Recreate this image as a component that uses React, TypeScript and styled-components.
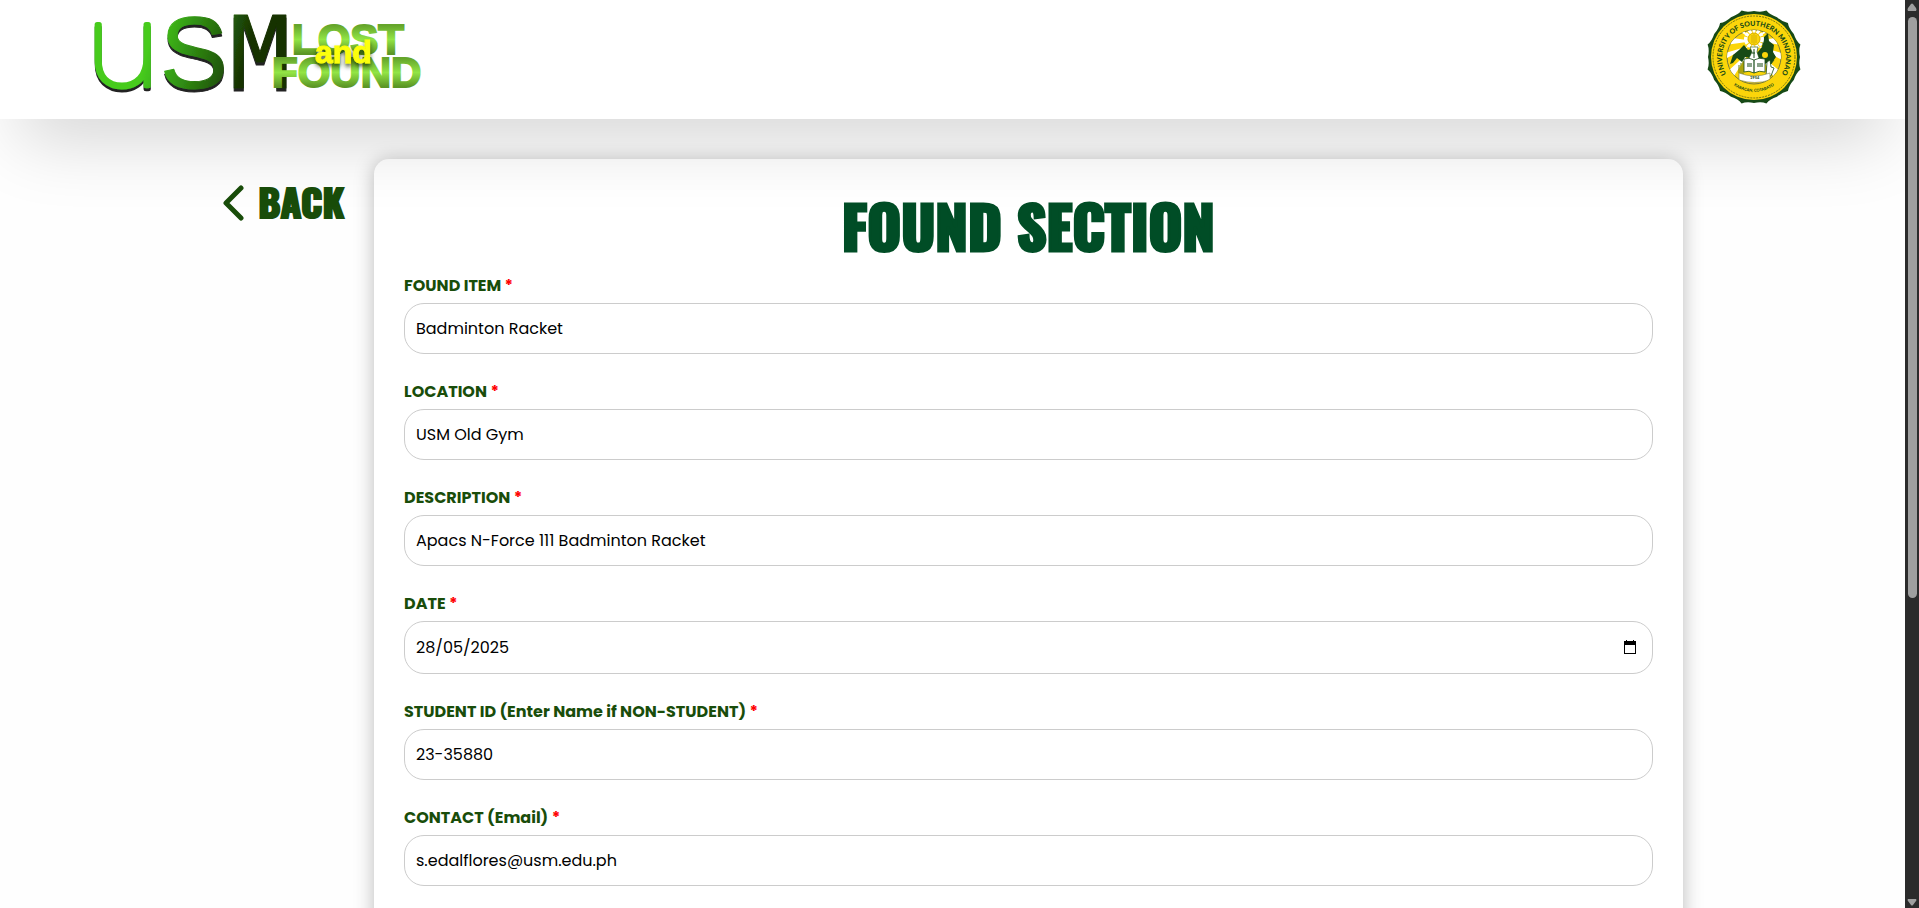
import React, { useId } from "react";
import styled, { createGlobalStyle } from "styled-components";

const bodyFont = `Poppins, Inter, "Liberation Sans", sans-serif`;
const headingFont = `Impact, Oswald, Anton, "DejaVu Sans Condensed", sans-serif`;

const GlobalStyle = createGlobalStyle`
  *, *::before, *::after { box-sizing: border-box; }
  body { margin: 0; background: #fff; font-family: ${bodyFont}; }
`;

const Shell = styled.div`
  display: grid;
  grid-template-columns: minmax(0, 1fr) 14px;
  height: 100vh;
`;

const Page = styled.div`
  overflow: auto;
  scrollbar-width: none;
  background: #fefefe;
`;

const Header = styled.header`
  position: relative;
  z-index: 1;
  display: flex;
  justify-content: space-between;
  align-items: flex-start;
  padding: 8px 102px 12px 80px;
  background: #fff;
  box-shadow: 0 40px 70px -20px rgba(0, 0, 0, 0.17);
`;

const Main = styled.main`
  display: flex;
  align-items: flex-start;
  gap: 30px;
  padding: 40px 222px;
`;

const BackLink = styled.a`
  display: flex;
  align-items: center;
  justify-content: space-between;
  flex: 0 0 122px;
  min-width: 0;
  margin-top: 20px;
  color: #194d0a;
  font: 700 38px/44px ${headingFont};
  -webkit-text-stroke: 2px currentColor;
  text-decoration: none;
`;

const BackText = styled.span`
  padding-bottom: 4px;
`;

const Card = styled.form`
  flex: 1;
  min-width: 0;
  padding: 30px;
  border-radius: 15px;
  background: #fff;
  box-shadow: 0 2px 20px rgba(0, 0, 0, 0.27);
`;

const Title = styled.h1`
  margin: 0 0 13px;
  color: #004d26;
  font: 700 58px/72px ${headingFont};
  -webkit-text-stroke: 3px currentColor;
  text-align: center;
`;

const Field = styled.div`
  display: flex;
  flex-direction: column;
  gap: 5px;
  margin-bottom: 26px;
`;

const Label = styled.label`
  color: #194d0a;
  font-size: 16px;
  font-weight: 700;
  line-height: 24px;
`;

const Required = styled.span`
  color: #f00;
`;

const InputBox = styled.div<{ $tall?: boolean }>`
  display: flex;
  align-items: center;
  height: ${(p) => (p.$tall ? 53 : 51)}px;
  padding: 0 11px;
  border: 1px solid #ccc;
  border-radius: 20px;
`;

const Input = styled.input`
  flex: 1;
  min-width: 0;
  padding: 0;
  border: 0;
  outline: 0;
  background: transparent;
  color: #000;
  font: 400 16px/24px ${bodyFont};
`;

const PickerButton = styled.button`
  display: flex;
  padding: 4px;
  border: 0;
  background: transparent;
`;

const ScrollTrack = styled.div`
  display: flex;
  flex-direction: column;
  align-items: center;
  background: #2b2b2b;
`;

const ScrollThumb = styled.div`
  width: 9px;
  height: 64%;
  margin: 4px 0 auto;
  border-radius: 5px;
  background: #9f9f9f;
`;

const Arrow = ({ down }: { down?: boolean }) => (
  <svg width="14" height="13" viewBox="0 0 14 13" aria-hidden="true">
    <path
      d={down ? "M3 4h8q1 1 0 2L8 10q-1 1-2 0L3 6q-1-1 0-2Z" : "M3 11h8q1-1 0-3L8 4q-1-1-2 0L3 8q-1 2 0 3Z"}
      fill="#9f9f9f"
    />
  </svg>
);

const LogoDrawing = styled.svg`
  overflow: visible;
`;

const SiteLogo = () => (
  <LogoDrawing width="360" height="99" viewBox="80 8 360 99" role="img" aria-label="USM Lost and Found">
    <defs>
      <linearGradient id="ink" gradientUnits="userSpaceOnUse" x1="150" y1="40" x2="245" y2="65">
        <stop offset="0" stopColor="#46cb1c" />
        <stop offset="0.3" stopColor="#36a016" />
        <stop offset="0.75" stopColor="#225c0a" />
        <stop offset="1" stopColor="#173003" />
      </linearGradient>
      <linearGradient id="lime" x1="0" y1="0" x2="0" y2="1">
        <stop offset="0.2" stopColor="#65a52b" />
        <stop offset="0.5" stopColor="#92e545" />
        <stop offset="0.8" stopColor="#5c9625" />
      </linearGradient>
      <filter id="inkShadow" x="-10%" y="-10%" width="120%" height="130%">
        <feDropShadow dx="0" dy="3" stdDeviation="0.4" floodColor="#222" />
      </filter>
      <filter id="andShadow" x="-20%" y="-20%" width="140%" height="160%">
        <feDropShadow dx="0" dy="3" stdDeviation="2" floodColor="#1b3300" floodOpacity="0.8" />
      </filter>
    </defs>
    <g fill="url(#ink)" stroke="url(#ink)" strokeLinejoin="round" filter="url(#inkShadow)">
      <text x="88" y="86" fontFamily="Poppins" fontWeight="200" fontSize="114" strokeWidth="5">u</text>
      <text x="160" y="88" fontFamily="Liberation Sans" fontSize="102" strokeWidth="1">S</text>
      <text x="230" y="88" fontFamily="DejaVu Sans Mono" fontSize="100" strokeWidth="1">M</text>
    </g>
    <g fontFamily="Liberation Sans" fontWeight="700" fontSize="42" fill="url(#lime)" stroke="url(#lime)" strokeWidth="2">
      <text x="292" y="54">LOST</text>
      <text x="272" y="87">FOUND</text>
    </g>
    <text x="315" y="63" fontFamily="Liberation Sans" fontWeight="700" fontSize="32" fill="#fcff08" stroke="#fcff08" filter="url(#andShadow)">and</text>
  </LogoDrawing>
);

const SEAL_POINTS = Array.from({ length: 12 }, (_, i) => {
  const at = (a: number, r: number) =>
    `${(Math.sin(a) * r).toFixed(1)} ${(-Math.cos(a) * r).toFixed(1)}`;
  const a = ((i + 0.5) * Math.PI) / 6;
  return `${i ? "L" : "M"}${at(a, 48)} Q${at(a + 0.1, 45)} ${at(a + Math.PI / 12, 46)} Q${at(a + 0.42, 45)} ${at(a + Math.PI / 6, 48)}`;
}).join(" ");

const Seal = () => (
  <svg width="98" height="98" viewBox="-49 -49 98 98" role="img" aria-label="University of Southern Mindanao seal">
    <defs>
      <path id="sealTop" d="M-27 18A32 32 0 1 1 27 18" />
      <path id="sealBottom" d="M-22 27A35 35 0 0 0 22 27" />
      <clipPath id="sealDisc"><circle r="27" /></clipPath>
    </defs>
    <path d={SEAL_POINTS} fill="#174a16" />
    <circle r="43" fill="#fbd50a" />
    <circle r="41" fill="none" stroke="#6f7310" strokeWidth="1" strokeDasharray="2 1" />
    <circle r="27" fill="#fbd50a" stroke="#777a39" strokeWidth="1" />
    <g clipPath="url(#sealDisc)">
      <path d="M0-16-28-12v-8ZM-2-12-29 2v-6ZM-4-6-22 22l-6-6ZM-6-20-20-30h8ZM2-16 28-20v8ZM3-11 28-4v7ZM4-4 28 16l-6 7ZM5-20 13-30h7Z" fill="#fff" />
      <path d="M-24 7l3-9 6-5 5-5 4 5 3-1 2 5-3 4-5-1-3 5-5-4-4 5ZM3-4l5-6 1-9 5-5 1 8 5 4-1 7 3 5-5 7-5-1-4 6-4-6Z" fill="#174a16" />
      <circle cx="0" cy="-18" r="8" fill="none" stroke="#fff" strokeWidth="4" strokeDasharray="3 1" />
      <circle cx="0" cy="-18" r="6" fill="#fbd50a" stroke="#d9b000" />
      <path d="M-2-22v8M0-23v10M2-22v8" stroke="#c9a300" strokeWidth="0.7" />
      <path d="M-4-10h8l-1 5 2 6-2 6h-6l-2-6 3-6Z" fill="#fff" stroke="#174a16" strokeWidth="0.6" />
      <path d="M0-8v9M-2-4h3" stroke="#174a16" strokeWidth="1" />
      <circle cx="11" cy="-2" r="3" fill="#fbd50a" />
      <path d="M-13 6v12M-11 4v13M-15 8v8" stroke="#5d7411" strokeWidth="1" />
      <path d="M13 5l3-2 1 7 3 1-3 8h-5ZM17 7l3-4" fill="#fff" stroke="#174a16" strokeWidth="0.8" />
      <path d="M-15 16q15 6 31 0v7q-15 5-31 0Z" fill="#fff" stroke="#777a39" strokeWidth="0.6" />
      <path d="M-10 2Q-5 0 0 3q5-3 11-1v13Q5 13 0 16q-5-3-10-1Z" fill="#fff" stroke="#174a16" strokeWidth="0.8" />
      <path d="M0 3v13M-7 7h5M-7 9h5M3 7h6M3 9h6" stroke="#174a16" strokeWidth="1.2" />
    </g>
    <text x="-4" y="22" fontSize="4" fontFamily="Lato" fontWeight="900" fill="#174a16">1954</text>
    <g fontFamily="Lato" fontWeight="900" fill="#174a16">
      <text fontSize="7">
        <textPath href="#sealTop" startOffset="50%" textAnchor="middle">UNIVERSITY OF SOUTHERN MINDANAO</textPath>
      </text>
      <text fontSize="4">
        <textPath href="#sealBottom" startOffset="50%" textAnchor="middle">KABACAN, COTABATO</textPath>
      </text>
    </g>
  </svg>
);

const Chevron = () => (
  <svg width="22" height="38" viewBox="0 0 22 38" aria-hidden="true">
    <path d="M19 4 4 19l15 15" fill="none" stroke="currentColor" strokeWidth="5" strokeLinecap="round" strokeLinejoin="round" />
  </svg>
);

const CalendarIcon = () => (
  <svg width="14" height="15" viewBox="0 0 14 15" aria-hidden="true">
    <path d="M3 0h1v1h6V0h1v1h2v13H1V1h2ZM2 5v8h10V5Z" fill="#000" fillRule="evenodd" />
  </svg>
);

type FormFieldProps = { label: string; value: string; type?: string; picker?: boolean };

const FormField = ({ label, value, type = "text", picker }: FormFieldProps) => {
  const id = useId();
  return (
    <Field>
      <Label htmlFor={id}>
        {label} <Required>*</Required>
      </Label>
      <InputBox $tall={picker}>
        <Input id={id} type={type} defaultValue={value} />
        {picker && (
          <PickerButton type="button" aria-label="Open calendar">
            <CalendarIcon />
          </PickerButton>
        )}
      </InputBox>
    </Field>
  );
};

export default function App() {
  return (
    <Shell>
      <GlobalStyle />
      <Page>
        <Header>
          <SiteLogo />
          <Seal />
        </Header>
        <Main>
          <BackLink href="#">
            <Chevron />
            <BackText>BACK</BackText>
          </BackLink>
          <Card>
            <Title>FOUND SECTION</Title>
            <FormField label="FOUND ITEM" value="Badminton Racket" />
            <FormField label="LOCATION" value="USM Old Gym" />
            <FormField label="DESCRIPTION" value="Apacs N-Force 111 Badminton Racket" />
            <FormField label="DATE" value="28/05/2025" picker />
            <FormField label="STUDENT ID (Enter Name if NON-STUDENT)" value="23-35880" />
            <FormField label="CONTACT (Email)" value="s.edalflores@usm.edu.ph" type="email" />
          </Card>
        </Main>
      </Page>
      <ScrollTrack aria-hidden="true">
        <Arrow />
        <ScrollThumb />
        <Arrow down />
      </ScrollTrack>
    </Shell>
  );
}
